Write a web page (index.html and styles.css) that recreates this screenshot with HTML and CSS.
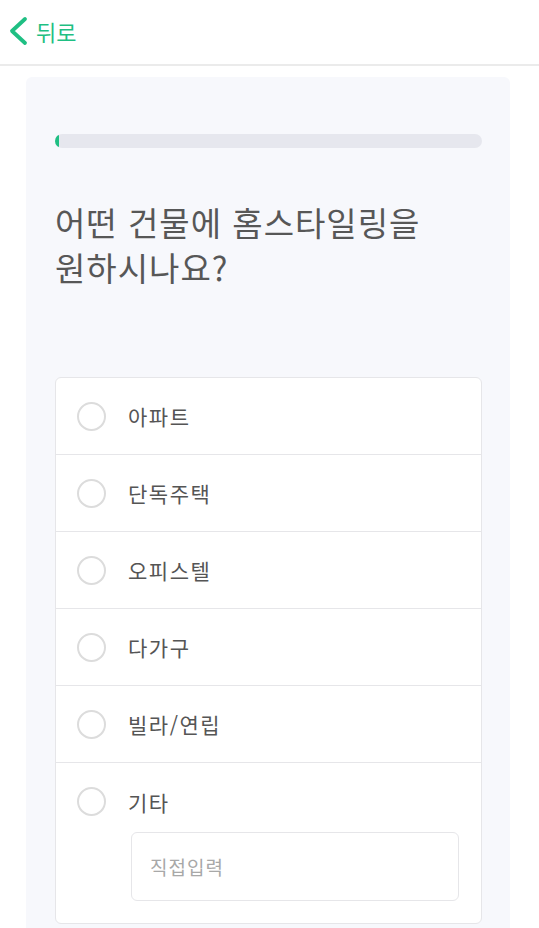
FILE: index.html
```html
<!DOCTYPE html>
<html lang="ko">
<head>
    <meta charset="UTF-8">
    <meta name="viewport" content="width=device-width, initial-scale=1.0">
    <title>홈스타일링 신청</title>
    <link rel="stylesheet" href="styles.css">
</head>
<body>
    <header class="top-bar">
        <a class="back-link" href="#">
            <svg class="back-icon" width="20" height="30" viewBox="0 0 20 30">
                <path d="M17 3 L4 15 L17 27" fill="none" stroke="#1fbf83" stroke-width="3.8" stroke-linecap="round" stroke-linejoin="round"/>
            </svg>
            <span>뒤로</span>
        </a>
    </header>

    <main class="survey-panel">
        <div class="progress-track">
            <div class="progress-fill" style="width: 1%"></div>
        </div>

        <h1 class="question">어떤 건물에 홈스타일링을<br>원하시나요?</h1>

        <ul class="option-list">
            <li class="option-row"><span class="radio"></span><span class="option-label">아파트</span></li>
            <li class="option-row"><span class="radio"></span><span class="option-label">단독주택</span></li>
            <li class="option-row"><span class="radio"></span><span class="option-label">오피스텔</span></li>
            <li class="option-row"><span class="radio"></span><span class="option-label">다가구</span></li>
            <li class="option-row"><span class="radio"></span><span class="option-label">빌라/연립</span></li>
            <li class="option-row option-other">
                <div class="option-line"><span class="radio"></span><span class="option-label">기타</span></div>
                <input class="other-input" type="text" placeholder="직접입력">
            </li>
        </ul>
    </main>
</body>
</html>
```

FILE: styles.css
```css
* {
    margin: 0;
    padding: 0;
    box-sizing: border-box;
    font-family: 'Noto Sans CJK KR', 'Noto Sans', sans-serif;
}

body {
    width: 539px;
    height: 928px;
    background-color: #ffffff;
    overflow: hidden;
}

.top-bar {
    height: 66px;
    border-bottom: 2px solid #ebebeb;
    display: flex;
    align-items: center;
    padding-left: 8px;
    padding-bottom: 2px;
}

.back-link {
    display: flex;
    align-items: center;
    gap: 8px;
    color: #1fbf83;
    text-decoration: none;
    font-size: 22px;
}

.back-icon {
    display: block;
}

.survey-panel {
    margin: 11px 0 0 26px;
    width: 484px;
    height: 851px;
    background-color: #f7f8fc;
    border-radius: 6px 6px 0 0;
    padding: 57px 28px 0 29px;
}

.progress-track {
    height: 14px;
    border-radius: 7px;
    background-color: #e6e7ee;
    overflow: hidden;
}

.progress-fill {
    height: 100%;
    background-color: #1fbf83;
    border-radius: 7px;
}

.question {
    margin-top: 52px;
    font-size: 33px;
    font-weight: 400;
    line-height: 45px;
    letter-spacing: 1px;
    color: #575757;
}

.option-list {
    list-style: none;
    margin-top: 87px;
    background-color: #ffffff;
    border: 1px solid #e6e6e9;
    border-radius: 6px;
}

.option-row {
    height: 77px;
    display: flex;
    align-items: center;
    padding-left: 21px;
    gap: 22px;
    border-bottom: 1px solid #e6e6e9;
}

.option-other {
    height: auto;
    display: block;
    border-bottom: none;
    padding: 0 22px 22px 21px;
}

.option-line {
    height: 69px;
    display: flex;
    align-items: center;
    gap: 22px;
    padding-top: 8px;
}

.radio {
    width: 29px;
    height: 29px;
    border: 2px solid #dcdcdc;
    border-radius: 50%;
    flex-shrink: 0;
}

.option-label {
    font-size: 21px;
    letter-spacing: 1.5px;
    color: #555555;
}

.other-input {
    display: block;
    margin: 0 0 0 54px;
    width: 328px;
    height: 69px;
    border: 1px solid #e6e6e9;
    border-radius: 6px;
    padding: 0 18px;
    font-size: 19px;
    letter-spacing: 1px;
    color: #555555;
}

.other-input::placeholder {
    color: #a8a8a8;
}
```
